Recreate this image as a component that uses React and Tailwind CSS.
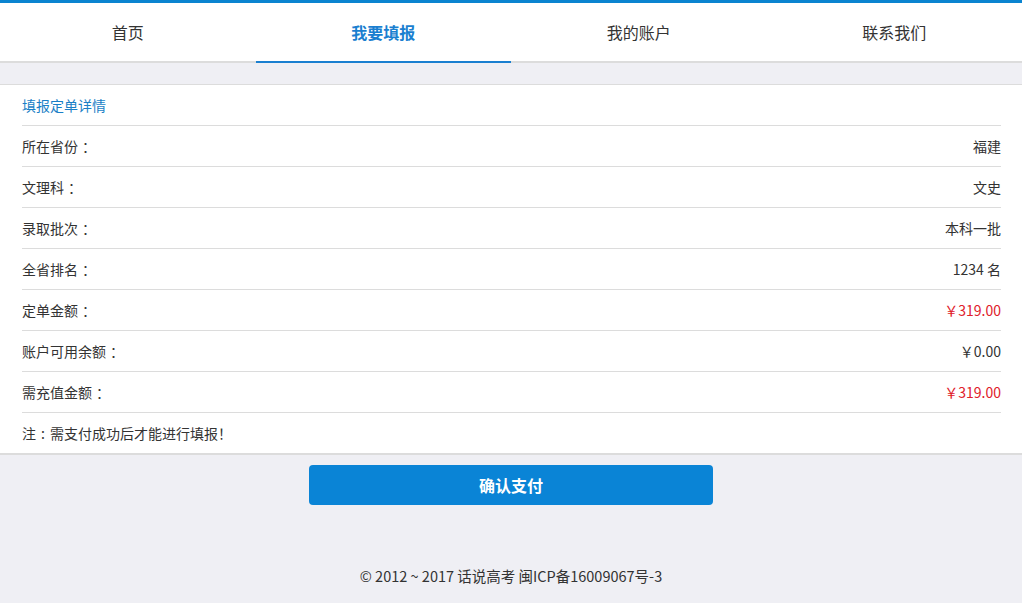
import React from "react";

const font = { fontFamily: '"Noto Sans CJK SC", "Noto Sans", sans-serif' };

const rows = [
  ["所在省份", "福建", false],
  ["文理科", "文史", false],
  ["录取批次", "本科一批", false],
  ["全省排名", "1234 名", false],
  ["定单金额", "￥319.00", true],
  ["账户可用余额", "￥0.00", false],
  ["需充值金额", "￥319.00", true],
];

const Colon = () => <span className="inline-block pl-[4px]">：</span>;

export default function App() {
  return (
    <div className="min-h-[603px] bg-[#efeff4] text-[#333]" style={font}>
      <nav className="flex h-[63px] border-t-[3px] border-b-2 border-t-[#0a84d0] border-b-[#dcdcdc] bg-white">
        {["首页", "我要填报", "我的账户", "联系我们"].map((t, i) => (
          <div
            key={t}
            className={
              "flex flex-1 items-center justify-center text-[16px] " +
              (i === 1 ? "font-bold text-[#1a7fd0] border-b-2 border-[#1a7fd0] -mb-[2px]" : "text-[#333]")
            }
          >
            {t}
          </div>
        ))}
      </nav>
      <div className="h-[21px]" />
      <section className="border-t border-b-2 border-[#dcdcdc] bg-white pl-[22px] pr-[21px]">
        <div className="flex h-[41px] items-center border-b border-[#dcdcdc] text-[14px] text-[#1a7fc6]">
          填报定单详情
        </div>
        {rows.map(([k, v, red]) => (
          <div key={k} className="flex h-[41px] items-center justify-between border-b border-[#dcdcdc] text-[14px]">
            <span>
              {k}
              <Colon />
            </span>
            <span className={red ? "text-[#e0202a]" : "text-[#333]"}>{v}</span>
          </div>
        ))}
        <div className="flex h-[40px] items-center text-[14px]">
          <span>注</span>
          <span className="px-[5px]">:</span>
          <span>需支付成功后才能进行填报！</span>
        </div>
      </section>
      <div className="mt-[10px] flex justify-center">
        <button className="flex h-[40px] w-[404px] items-center justify-center rounded-[4px] bg-[#0a84d6] text-[16px] font-bold text-white">
          确认支付
        </button>
      </div>
      <footer className="mt-[61px] text-center text-[14.5px] leading-[20px] text-[#333]">
        © 2012 ~ 2017 话说高考 闽ICP备16009067号-3
      </footer>
    </div>
  );
}
